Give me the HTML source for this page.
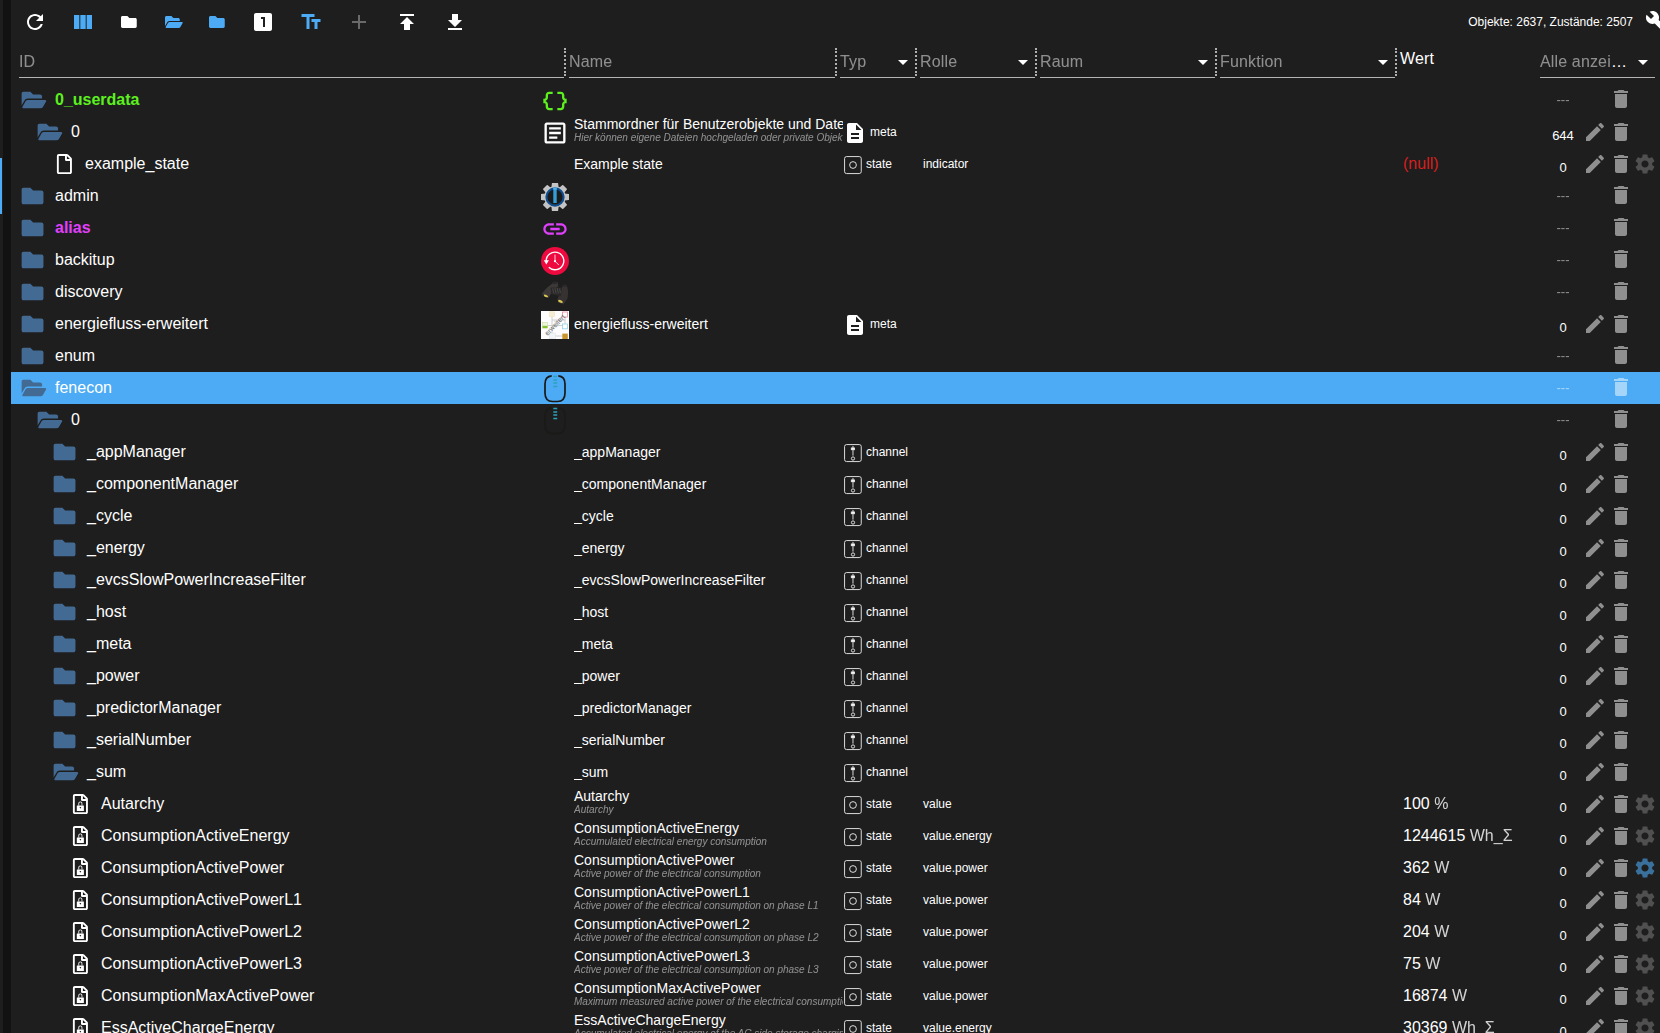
<!DOCTYPE html>
<html lang="de"><head><meta charset="utf-8"><title>objects - ioBroker</title>
<style>
*{box-sizing:border-box}
html,body{margin:0;padding:0;background:#1e1e1e;overflow:hidden}
body{font-family:"Liberation Sans",Arial,Helvetica,sans-serif;color:#fff}
#app{position:relative;width:1660px;height:1033px;overflow:hidden;background:#1e1e1e}
.strip{position:absolute;left:0;top:0;width:3px;height:1033px;background:#1e1e1e}
.strip2{position:absolute;left:3px;top:0;width:8px;height:1033px;background:#121212}
.stripsel{position:absolute;left:0;top:158px;width:2px;height:56px;background:#4dabf5}
.main{position:absolute;left:0;top:0;width:1660px;height:1033px}
.ic{position:absolute;fill:currentColor;display:block;overflow:visible}
.stats{position:absolute;right:27px;top:14px;font-size:12px;line-height:16px;white-space:nowrap}
.hid{position:absolute;left:19px;top:46px;font-size:16px;line-height:32px;color:#fff;filter:opacity(.5)}
.ul{position:absolute;top:77px;height:1px;background:#b4b4b4}
.hc{position:absolute;top:48px;height:28px;border-left:2px dotted #b0b0b0;font-size:16px;color:#8a8a8a}
.hc span{position:absolute;left:3px;top:-2px;line-height:32px;color:#fff;filter:opacity(.5)}
.hc span.wert{color:#fff;top:-5px;filter:none}
.hall{position:absolute;left:1540px;top:46px;width:90px;font-size:16px;line-height:32px;color:#fff;white-space:nowrap}
.hall b{font-weight:normal;filter:opacity(.5);display:inline-block}
.hall i{font-style:normal;color:#fff}
.row{position:absolute;left:11px;width:1649px;height:32px;margin-left:-11px;padding-left:0}
.row{left:0;margin-left:0;width:1660px}
.row.sel::before{content:"";position:absolute;left:11px;right:0;top:0;height:32px;background:#4dabf5}
.id{position:absolute;top:0;font-size:16px;line-height:32px;white-space:nowrap}
.id.b{font-weight:bold}
.id.green{color:#5cf01e}
.id.mag{color:#e040fb}
.nic{position:absolute;width:28px;height:28px}
.nic svg{display:block}
.nm{position:absolute;left:574px;width:269px;overflow:hidden;white-space:nowrap}
.nm.one{top:0;font-size:14px;line-height:32px}
.nm.two{top:0;height:32px}
.n1{font-size:14px;line-height:16px;margin-top:0}
.n2{font-size:10px;line-height:11px;font-style:italic;color:#fff;filter:opacity(.5);margin-top:0}
.ty{position:absolute;top:0;font-size:12px;line-height:32px}
.ro{position:absolute;left:923px;top:0;font-size:12px;line-height:32px;white-space:nowrap}
.va{position:absolute;left:1403px;top:0;font-size:16px;line-height:32px;white-space:nowrap}
.va .unit{filter:opacity(.8)}
.null{color:#d81e1e}
.acl{position:absolute;left:1543px;width:40px;text-align:center;top:4px;font-size:13px;line-height:32px}
.acl.dash{top:0;color:#fff;filter:opacity(.5)}

.hid,.hc span,.hall{letter-spacing:.15px}
.hall b{position:relative}

</style></head><body>
<svg width="0" height="0" style="position:absolute"><defs>
<symbol id="i-refresh" viewBox="0 0 24 24"><path d="M17.65 6.35C16.2 4.9 14.21 4 12 4c-4.42 0-7.99 3.58-7.99 8s3.57 8 7.99 8c3.73 0 6.84-2.55 7.73-6h-2.08c-.82 2.33-3.04 4-5.65 4-3.31 0-6-2.69-6-6s2.69-6 6-6c1.66 0 3.14.69 4.22 1.78L13 11h7V4l-2.35 2.35z"/></symbol>
<symbol id="i-viewcol" viewBox="0 0 24 24"><path d="M14.67 5v14H9.33V5h5.34zm1 14H21V5h-5.33v14zm-7.34 0V5H3v14h5.33z"/></symbol>
<symbol id="i-folder" viewBox="0 0 24 24"><path d="M10 4H4c-1.1 0-1.99.9-1.99 2L2 18c0 1.1.9 2 2 2h16c1.1 0 2-.9 2-2V8c0-1.1-.9-2-2-2h-8l-2-2z"/></symbol>
<symbol id="i-faopen" viewBox="0 0 650 512"><path d="M572.694 292.093L500.27 416.248A63.997 63.997 0 0 1 444.989 448H45.025c-18.523 0-30.064-20.093-20.731-36.093l72.424-124.155A64 64 0 0 1 152 256h399.964c18.523 0 30.064 20.093 20.73 36.093zM152 224h328v-48c0-26.51-21.49-48-48-48H272l-64-64H48C21.49 64 0 85.49 0 112v278.046l69.077-118.418C86.214 242.25 117.989 224 152 224z"/></symbol>
<symbol id="i-faclosed" viewBox="0 0 650 512"><path d="M464 128H272l-64-64H48C21.49 64 0 85.49 0 112v288c0 26.51 21.49 48 48 48h416c26.51 0 48-21.49 48-48V176c0-26.51-21.49-48-48-48z"/></symbol>
<symbol id="i-fadoc" viewBox="0 0 384 512"><path d="M369.9 97.9L286 14C277 5 264.8 0 252.1 0H48C21.5 0 0 21.5 0 48v416c0 26.5 21.5 48 48 48h288c26.5 0 48-21.5 48-48V131.900c0-12.700-5.100-25-14.100-34zM332.100 128H256V51.900l76.100 76.100zM48 464V48h160v104c0 13.300 10.700 24 24 24h104v288H48z"/></symbol>
<symbol id="i-fadoclock" viewBox="0 0 384 512"><path d="M369.9 97.9L286 14C277 5 264.8 0 252.1 0H48C21.5 0 0 21.5 0 48v416c0 26.5 21.5 48 48 48h288c26.5 0 48-21.5 48-48V131.900c0-12.700-5.100-25-14.100-34zM332.100 128H256V51.900l76.100 76.100zM48 464V48h160v104c0 13.300 10.700 24 24 24h104v288H48z"/><path fill-rule="evenodd" d="M108 294h165q8 0 8 8v125q0 8-8 8H108q-8 0-8-8V302q0-8 8-8zM169 334h44l-22 42z"/><path d="M139 296V244a52 52 0 0 1 104 0V296h-22V244a30 30 0 0 0-60 0V296z"/></symbol>
<symbol id="i-looks1" viewBox="0 0 24 24"><path d="M19 3H5c-1.1 0-2 .9-2 2v14c0 1.1.9 2 2 2h14c1.1 0 2-.9 2-2V5c0-1.1-.9-2-2-2zm-5 14h-2V9h-2V7h4v10z"/></symbol>
<symbol id="i-textfields" viewBox="0 0 24 24"><path d="M2.5 4v3h5v12h3V7h5V4h-13zm19 5h-9v3h3v7h3v-7h3V9z"/></symbol>
<symbol id="i-add" viewBox="0 0 24 24"><path d="M19 13h-6v6h-2v-6H5v-2h6V5h2v6h6v2z"/></symbol>
<symbol id="i-publish" viewBox="0 0 24 24"><path d="M5 4v2h14V4H5zm0 10h4v6h6v-6h4l-7-7-7 7z"/></symbol>
<symbol id="i-getapp" viewBox="0 0 24 24"><path d="M5 20v-2h14v2H5zm0-10h4V4h6v6h4l-7 7-7-7z"/></symbol>
<symbol id="i-build" viewBox="0 0 24 24"><path d="M22.7 19l-9.100-9.100c.9-2.300.4-5-1.500-6.900-2-2-5-2.400-7.400-1.300L9 6 6 9 1.600 4.700C.4 7.100.9 10.100 2.900 12.100c1.900 1.900 4.600 2.400 6.900 1.500l9.100 9.100c.4.400 1 .400 1.400 0l2.300-2.300c.5-.4.5-1.100.1-1.400z"/></symbol>
<symbol id="i-delete" viewBox="0 0 24 24"><path d="M6 19c0 1.100.9 2 2 2h8c1.100 0 2-.9 2-2V7H6v12zM19 4h-3.500l-1-1h-5l-1 1H5v2h14V4z"/></symbol>
<symbol id="i-edit" viewBox="0 0 24 24"><path d="M3 17.25V21h3.750L17.810 9.940l-3.750-3.750L3 17.250zM20.710 7.040c.39-.39.39-1.020 0-1.410l-2.340-2.340c-.39-.39-1.020-.39-1.410 0l-1.830 1.830 3.750 3.750 1.830-1.830z"/></symbol>
<symbol id="i-settings" viewBox="0 0 24 24"><path d="M19.14 12.94c.04-.3.06-.61.06-.94 0-.32-.02-.64-.07-.94l2.030-1.580c.18-.14.23-.41.12-.61l-1.920-3.320c-.12-.22-.37-.29-.59-.22l-2.390.96c-.5-.38-1.030-.7-1.620-.94l-.36-2.540c-.04-.24-.24-.41-.48-.41h-3.840c-.24 0-.43.17-.47.41l-.36 2.540c-.59.24-1.130.57-1.620.94l-2.390-.96c-.22-.08-.47 0-.59.22L2.740 8.870c-.12.21-.08.47.12.61l2.030 1.580c-.05.3-.09.63-.09.94s.02.64.07.94l-2.030 1.580c-.18.14-.23.41-.12.61l1.920 3.320c.12.22.37.29.59.22l2.390-.96c.5.38 1.030.7 1.620.94l.36 2.540c.05.24.24.41.48.41h3.840c.24 0 .44-.17.47-.41l.36-2.540c.59-.24 1.130-.56 1.620-.94l2.390.96c.22.08.47 0 .59-.22l1.920-3.320c.12-.22.07-.47-.12-.61l-2.010-1.580zM12 15.600c-1.980 0-3.600-1.620-3.600-3.600s1.620-3.600 3.600-3.600 3.600 1.620 3.600 3.600-1.620 3.600-3.600 3.600z"/></symbol>
<symbol id="i-dd" viewBox="0 0 24 24"><path d="M7 10l5 5 5-5z"/></symbol>
<symbol id="i-description" viewBox="0 0 24 24"><path d="M14 2H6c-1.100 0-1.990.9-1.990 2L4 20c0 1.100.89 2 1.990 2H18c1.100 0 2-.9 2-2V8l-6-6zm2 16H8v-2h8v2zm0-4H8v-2h8v2zm-3-5V3.500L18.500 9H13z"/></symbol>
<symbol id="i-link" viewBox="0 0 24 24"><path d="M3.900 12c0-1.710 1.390-3.100 3.100-3.100h4V7H7c-2.760 0-5 2.240-5 5s2.240 5 5 5h4v-1.900H7c-1.710 0-3.100-1.390-3.100-3.100zM8 13h8v-2H8v2zm9-6h-4v1.900h4c1.710 0 3.100 1.390 3.100 3.100s-1.390 3.100-3.100 3.100h-4V17h4c2.760 0 5-2.240 5-5s-2.240-5-5-5z"/></symbol>
<symbol id="i-article" viewBox="0 0 24 24"><path d="M19 5v14H5V5h14m0-2H5c-1.100 0-2 .9-2 2v14c0 1.100.9 2 2 2h14c1.100 0 2-.9 2-2V5c0-1.100-.9-2-2-2zM14 17H7v-2h7v2zm3-4H7v-2h10v2zm0-4H7V7h10v2z"/></symbol>
<symbol id="i-dataobj" viewBox="0 0 24 24"><path d="M4 7v2c0 .55-.45 1-1 1H2v4h1c.55 0 1 .45 1 1v2c0 1.650 1.350 3 3 3h3v-2H7c-.55 0-1-.45-1-1v-2c0-1.300-.84-2.420-2-2.830v-.34C5.160 11.420 6 10.300 6 9V7c0-.55.45-1 1-1h3V4H7C5.350 4 4 5.350 4 7zM21 10c-.55 0-1-.45-1-1V7c0-1.650-1.350-3-3-3h-3v2h3c.55 0 1 .45 1 1v2c0 1.300.84 2.420 2 2.830v.34c-1.160.41-2 1.520-2 2.830v2c0 .55-.45 1-1 1h-3v2h3c1.650 0 3-1.350 3-3v-2c0-.55.45-1 1-1h1v-4h-1z"/></symbol>
<symbol id="i-state" viewBox="0 0 320 320"><rect fill="none" rx="32" height="272" width="267" y="25" x="25" stroke-width="15" stroke="currentColor"/><ellipse fill="none" ry="54" rx="54" cy="160" cx="160" stroke-width="15" stroke="currentColor"/></symbol>
<symbol id="i-channel" viewBox="0 0 320 320"><rect fill="none" rx="32" height="272" width="267" y="25" x="25" stroke-width="15" stroke="currentColor"/><ellipse stroke="currentColor" ry="26" rx="26" cy="248" cx="160" fill="none" stroke-width="15"/><line y2="201.9" x2="159.5" y1="46.9" x1="159.5" stroke-width="15" stroke="currentColor" fill="none"/><rect height="27" width="50" y="79.8" x="133.500" stroke-width="15" stroke="currentColor" fill="#fff"/></symbol>
</defs></svg>
<div id="app">
<div class="strip"></div><div class="strip2"></div><div class="stripsel"></div>
<div class="main">
<svg class="ic" style="left:23px;top:10px;width:24px;height:24px;color:#fff;"><use href="#i-refresh" width="24" height="24"/></svg><svg class="ic" style="left:71px;top:10px;width:24px;height:24px;color:#4dabf5;"><use href="#i-viewcol" width="24" height="24"/></svg><svg class="ic" style="left:121px;top:12px;width:20px;height:20px;color:#fff;"><use href="#i-faclosed" width="20" height="20"/></svg><svg class="ic" style="left:165px;top:12px;width:20px;height:20px;color:#4dabf5;"><use href="#i-faopen" width="20" height="20"/></svg><svg class="ic" style="left:209px;top:12px;width:20px;height:20px;color:#4dabf5;"><use href="#i-faclosed" width="20" height="20"/></svg><svg class="ic" style="left:251px;top:10px;width:24px;height:24px;color:#fff;"><use href="#i-looks1" width="24" height="24"/></svg><svg class="ic" style="left:299px;top:10px;width:24px;height:24px;color:#4dabf5;"><use href="#i-textfields" width="24" height="24"/></svg><svg class="ic" style="left:347px;top:10px;width:24px;height:24px;color:#6a6a6a;"><use href="#i-add" width="24" height="24"/></svg><svg class="ic" style="left:395px;top:10px;width:24px;height:24px;color:#fff;"><use href="#i-publish" width="24" height="24"/></svg><svg class="ic" style="left:443px;top:10px;width:24px;height:24px;color:#fff;"><use href="#i-getapp" width="24" height="24"/></svg>
<div class="stats">Objekte: 2637, Zustände: 2507</div>
<svg class="ic" style="left:1645px;top:10px;width:24px;height:24px;color:#fff;"><use href="#i-build" width="24" height="24"/></svg>
<div class="hid">ID</div><div class="ul" style="left:19px;width:545px"></div><div class="hc" style="left:564px;width:271px"><span>Name</span><div class="ul" style="left:3px;right:0;top:29px"></div></div><div class="hc" style="left:835px;width:80px"><span>Typ</span><div class="ul" style="left:3px;right:0;top:29px"></div><svg class="ic" style="left:54px;top:2px;width:24px;height:24px;color:#fff;"><use href="#i-dd" width="24" height="24"/></svg></div><div class="hc" style="left:915px;width:120px"><span>Rolle</span><div class="ul" style="left:3px;right:0;top:29px"></div><svg class="ic" style="left:94px;top:2px;width:24px;height:24px;color:#fff;"><use href="#i-dd" width="24" height="24"/></svg></div><div class="hc" style="left:1035px;width:180px"><span>Raum</span><div class="ul" style="left:3px;right:0;top:29px"></div><svg class="ic" style="left:154px;top:2px;width:24px;height:24px;color:#fff;"><use href="#i-dd" width="24" height="24"/></svg></div><div class="hc" style="left:1215px;width:180px"><span>Funktion</span><div class="ul" style="left:3px;right:0;top:29px"></div><svg class="ic" style="left:154px;top:2px;width:24px;height:24px;color:#fff;"><use href="#i-dd" width="24" height="24"/></svg></div><div class="hc" style="left:1395px;width:100px"><span class="wert">Wert</span></div><div class="hall"><b>Alle anzei</b><i>…</i></div><div class="ul" style="left:1540px;width:115px"></div><svg class="ic" style="left:1631px;top:50px;width:24px;height:24px;color:#fff;"><use href="#i-dd" width="24" height="24"/></svg>
<div class="row" style="top:84px"><svg class="ic" style="left:21px;top:2px;width:28px;height:28px;color:#436a93;"><use href="#i-faopen" width="28" height="28" transform="translate(0.4 0)"/></svg><div class="id b green" style="left:55px">0_userdata</div><svg class="ic" style="left:541px;top:3px;width:28px;height:28px;color:#5cf01e;"><use href="#i-dataobj" width="28" height="28"/></svg><div class="acl dash">---</div><svg class="ic" style="left:1609px;top:3px;width:24px;height:24px;color:#fff;opacity:0.5;"><use href="#i-delete" width="24" height="24"/></svg></div>
<div class="row" style="top:116px"><svg class="ic" style="left:37px;top:2px;width:28px;height:28px;color:#436a93;"><use href="#i-faopen" width="28" height="28" transform="translate(0.4 0)"/></svg><div class="id " style="left:71px">0</div><svg class="ic" style="left:541px;top:3px;width:28px;height:28px;color:#fff;"><use href="#i-article" width="28" height="28"/></svg><div class="nm two"><div class="n1">Stammordner für Benutzerobjekte und Dateien</div><div class="n2">Hier können eigene Dateien hochgeladen oder private Objekte und Zustände erstellt werden</div></div><svg class="ic" style="left:843px;top:5px;width:24px;height:24px;color:#fff;"><use href="#i-description" width="24" height="24"/></svg><div class="ty" style="left:870px">meta</div><div class="acl">644</div><svg class="ic" style="left:1583px;top:4px;width:24px;height:24px;color:#fff;opacity:0.5;"><use href="#i-edit" width="24" height="24"/></svg><svg class="ic" style="left:1609px;top:4px;width:24px;height:24px;color:#fff;opacity:0.5;"><use href="#i-delete" width="24" height="24"/></svg></div>
<div class="row" style="top:148px"><svg class="ic" style="left:54px;top:6px;width:20px;height:20px;color:#fff;"><use href="#i-fadoc" width="20" height="20" transform="translate(0.4 0)"/></svg><div class="id " style="left:85px">example_state</div><div class="nm one">Example state</div><svg class="ic" style="left:843px;top:7px;width:20px;height:20px;color:#e6e6e6;"><use href="#i-state" width="20" height="20"/></svg><div class="ty" style="left:866px">state</div><div class="ro">indicator</div><div class="va"><span class="null">(null)</span></div><div class="acl">0</div><svg class="ic" style="left:1583px;top:4px;width:24px;height:24px;color:#fff;opacity:0.5;"><use href="#i-edit" width="24" height="24"/></svg><svg class="ic" style="left:1609px;top:4px;width:24px;height:24px;color:#fff;opacity:0.5;"><use href="#i-delete" width="24" height="24"/></svg><svg class="ic" style="left:1633px;top:4px;width:24px;height:24px;color:#fff;opacity:0.22;"><use href="#i-settings" width="24" height="24"/></svg></div>
<div class="row" style="top:180px"><svg class="ic" style="left:21px;top:2px;width:28px;height:28px;color:#436a93;"><use href="#i-faclosed" width="28" height="28" transform="translate(0.4 0)"/></svg><div class="id " style="left:55px">admin</div><div class="nic" style="left:541px;top:3px"><svg width="28" height="28" viewBox="0 0 28 28"><g fill="#c4c4c4"><circle cx="14" cy="14" r="10.700"/><path d="M10.400 4.500L10.900 0.300Q11 -0.200 11.500 -0.200H16.500Q17 -0.200 17.100 0.300L17.600 4.500z"/><path d="M10.400 4.500L10.900 0.300Q11 -0.200 11.500 -0.200H16.500Q17 -0.200 17.100 0.300L17.600 4.500z" transform="rotate(45 14 14)"/><path d="M10.400 4.500L10.900 0.300Q11 -0.200 11.500 -0.200H16.500Q17 -0.200 17.100 0.300L17.600 4.500z" transform="rotate(90 14 14)"/><path d="M10.400 4.500L10.900 0.300Q11 -0.200 11.500 -0.200H16.500Q17 -0.200 17.100 0.300L17.600 4.500z" transform="rotate(135 14 14)"/><path d="M10.400 4.500L10.900 0.300Q11 -0.200 11.500 -0.200H16.500Q17 -0.200 17.100 0.300L17.600 4.500z" transform="rotate(180 14 14)"/><path d="M10.400 4.500L10.900 0.300Q11 -0.200 11.500 -0.200H16.500Q17 -0.200 17.100 0.300L17.600 4.500z" transform="rotate(225 14 14)"/><path d="M10.400 4.500L10.900 0.300Q11 -0.200 11.500 -0.200H16.500Q17 -0.200 17.100 0.300L17.600 4.500z" transform="rotate(270 14 14)"/><path d="M10.400 4.500L10.900 0.300Q11 -0.200 11.500 -0.200H16.500Q17 -0.200 17.100 0.300L17.600 4.500z" transform="rotate(315 14 14)"/></g><circle cx="14" cy="14" r="8.600" fill="#1b1a1b" stroke="#0f4d8d" stroke-width="2.100"/><rect x="12.300" y="4.600" width="3.400" height="15.400" fill="#369cd8"/><rect x="12.300" y="4.600" width="3.400" height="2" fill="#52b4ec"/></svg></div><div class="acl dash">---</div><svg class="ic" style="left:1609px;top:3px;width:24px;height:24px;color:#fff;opacity:0.5;"><use href="#i-delete" width="24" height="24"/></svg></div>
<div class="row" style="top:212px"><svg class="ic" style="left:21px;top:2px;width:28px;height:28px;color:#436a93;"><use href="#i-faclosed" width="28" height="28" transform="translate(0.4 0)"/></svg><div class="id b mag" style="left:55px">alias</div><svg class="ic" style="left:541px;top:3px;width:28px;height:28px;color:#e040fb;"><use href="#i-link" width="28" height="28"/></svg><div class="acl dash">---</div><svg class="ic" style="left:1609px;top:3px;width:24px;height:24px;color:#fff;opacity:0.5;"><use href="#i-delete" width="24" height="24"/></svg></div>
<div class="row" style="top:244px"><svg class="ic" style="left:21px;top:2px;width:28px;height:28px;color:#436a93;"><use href="#i-faclosed" width="28" height="28" transform="translate(0.4 0)"/></svg><div class="id " style="left:55px">backitup</div><div class="nic" style="left:541px;top:3px"><svg width="28" height="28" viewBox="0 0 28 28"><circle cx="14" cy="14" r="14" fill="#ee0a3e"/><path d="M5.200 14A8.800 8.800 0 1 1 7.800 20.200" fill="none" stroke="#fff" stroke-width="1.400"/><path d="M2.800 13.200H8L5.300 17.400z" fill="#fff"/><path d="M14 7.600V14.200L17.800 18" fill="none" stroke="#fff" stroke-width=".9" stroke-opacity=".9"/><circle cx="14" cy="14.200" r="1.100" fill="#fff"/></svg></div><div class="acl dash">---</div><svg class="ic" style="left:1609px;top:3px;width:24px;height:24px;color:#fff;opacity:0.5;"><use href="#i-delete" width="24" height="24"/></svg></div>
<div class="row" style="top:276px"><svg class="ic" style="left:21px;top:2px;width:28px;height:28px;color:#436a93;"><use href="#i-faclosed" width="28" height="28" transform="translate(0.4 0)"/></svg><div class="id " style="left:55px">discovery</div><div class="nic" style="left:541px;top:3px"><svg width="28" height="28" viewBox="0 0 28 28"><g><path d="M12.300 3.700L16.400 3l1 4.100-7.800 8.100-2 4.100-6.100-2-.7-2.700 5.400-6.100z" fill="#3c3838"/><path d="M21.800 6.400h4.100l1.300 6.100-.6 6.800-4.100 6.100-5.400-2-.7-3.400 3.400-7.500z" fill="#363232"/><path d="M9.600 8.500H21.100L19.800 17.300 10.300 15.200z" fill="#2a2828"/><path d="M11.500 9.500l1.500 5M13.800 9l1.400 5.500M16.200 9l1.200 5.500M18.600 9.500l.8 4.500" stroke="#4c4848" stroke-width=".9"/><ellipse cx="13.600" cy="3.700" rx="2.300" ry="1.200" fill="#2a2828"/><ellipse cx="23.800" cy="6.600" rx="2.300" ry="1.200" fill="#2a2828"/><ellipse cx="4.900" cy="16.900" rx="2.300" ry="1.100" transform="rotate(24 4.900 16.900)" fill="#d9c84e"/><ellipse cx="19.400" cy="22.400" rx="2.500" ry="1.200" transform="rotate(24 19.400 22.400)" fill="#d9c84e"/><path d="M1.800 15.500l1 2.800 4.500 1.500" stroke="#1a1818" stroke-width=".8" fill="none"/></g></svg></div><div class="acl dash">---</div><svg class="ic" style="left:1609px;top:3px;width:24px;height:24px;color:#fff;opacity:0.5;"><use href="#i-delete" width="24" height="24"/></svg></div>
<div class="row" style="top:308px"><svg class="ic" style="left:21px;top:2px;width:28px;height:28px;color:#436a93;"><use href="#i-faclosed" width="28" height="28" transform="translate(0.4 0)"/></svg><div class="id " style="left:55px">energiefluss-erweitert</div><div class="nic" style="left:541px;top:3px"><svg width="28" height="28" viewBox="0 0 28 28"><rect width="28" height="28" fill="#fdfdfd"/><path d="M11 5.600V22M6.500 14.500H21.500M14.400 25H21.300M24 6.300V12.800M11 9H24" stroke="#c4c4c4" stroke-width=".8" fill="none"/><rect x="8.200" y=".8" width="5.500" height="4.800" fill="#f6efd6" stroke="#eadfb4" stroke-width=".5"/><rect x="21.500" y="1" width="5" height="5" fill="#fff" stroke="#e58a9b" stroke-width=".8"/><rect x="1.500" y="11.500" width="5" height="5.800" fill="#eef6e0" stroke="#bcd98f" stroke-width=".5"/><rect x="1.500" y="14.800" width="5" height="2.200" fill="#86c232"/><rect x="21.500" y="13" width="5" height="4.800" fill="#fff" stroke="#93d1ea" stroke-width=".8"/><rect x="8.200" y="22" width="6.200" height="5.800" fill="#f2f4f5" stroke="#dcdfe2" stroke-width=".5"/><rect x="21.300" y="22.600" width="5.500" height="5.400" fill="#c8962e"/><text x="14" y="16.200" font-size="6.800" font-family="Liberation Sans, sans-serif" fill="#6c6c6c" text-anchor="middle" transform="rotate(-46 14 14)">erweitert</text></svg></div><div class="nm one">energiefluss-erweitert</div><svg class="ic" style="left:843px;top:5px;width:24px;height:24px;color:#fff;"><use href="#i-description" width="24" height="24"/></svg><div class="ty" style="left:870px">meta</div><div class="acl">0</div><svg class="ic" style="left:1583px;top:4px;width:24px;height:24px;color:#fff;opacity:0.5;"><use href="#i-edit" width="24" height="24"/></svg><svg class="ic" style="left:1609px;top:4px;width:24px;height:24px;color:#fff;opacity:0.5;"><use href="#i-delete" width="24" height="24"/></svg></div>
<div class="row" style="top:340px"><svg class="ic" style="left:21px;top:2px;width:28px;height:28px;color:#436a93;"><use href="#i-faclosed" width="28" height="28" transform="translate(0.4 0)"/></svg><div class="id " style="left:55px">enum</div><div class="acl dash">---</div><svg class="ic" style="left:1609px;top:3px;width:24px;height:24px;color:#fff;opacity:0.5;"><use href="#i-delete" width="24" height="24"/></svg></div>
<div class="row sel" style="top:372px"><svg class="ic" style="left:21px;top:2px;width:28px;height:28px;color:#436a93;"><use href="#i-faopen" width="28" height="28" transform="translate(0.4 0)"/></svg><div class="id " style="left:55px">fenecon</div><div class="nic" style="left:541px;top:3px"><svg width="28" height="28" viewBox="0 0 28 28"><path d="M10.700 .9C6.500 1.300 4 4.200 4 9V18C4 23.800 6.800 26.500 11.500 26.500H16.500C21.200 26.500 24 23.800 24 18V9C24 4.200 21.500 1.300 17.300 .9" fill="none" stroke="#1a1715" stroke-width="1.700"/><path d="M12.300 1.500H16.200M12.300 4.900H16.200M12.300 8.100H16.200M12.300 11.500H16.200" stroke="#2aa2bc" stroke-width="1.500"/></svg></div><div class="acl dash">---</div><svg class="ic" style="left:1609px;top:3px;width:24px;height:24px;color:#fff;opacity:0.5;"><use href="#i-delete" width="24" height="24"/></svg></div>
<div class="row" style="top:404px"><svg class="ic" style="left:37px;top:2px;width:28px;height:28px;color:#436a93;"><use href="#i-faopen" width="28" height="28" transform="translate(0.4 0)"/></svg><div class="id " style="left:71px">0</div><div class="nic" style="left:541px;top:3px"><svg width="28" height="28" viewBox="0 0 28 28"><path d="M10.700 .9C6.500 1.300 4 4.200 4 9V18C4 23.800 6.800 26.500 11.500 26.500H16.500C21.200 26.500 24 23.800 24 18V9C24 4.200 21.500 1.300 17.300 .9" fill="none" stroke="#1b1a19" stroke-width="1.700"/><path d="M12.300 1.500H16.200M12.300 4.900H16.200M12.300 8.100H16.200M12.300 11.500H16.200" stroke="#2aa2bc" stroke-width="1.500"/></svg></div><div class="acl dash">---</div><svg class="ic" style="left:1609px;top:3px;width:24px;height:24px;color:#fff;opacity:0.5;"><use href="#i-delete" width="24" height="24"/></svg></div>
<div class="row" style="top:436px"><svg class="ic" style="left:53px;top:2px;width:28px;height:28px;color:#436a93;"><use href="#i-faclosed" width="28" height="28" transform="translate(0.4 0)"/></svg><div class="id " style="left:87px">_appManager</div><div class="nm one">_appManager</div><svg class="ic" style="left:843px;top:7px;width:20px;height:20px;color:#e6e6e6;"><use href="#i-channel" width="20" height="20"/></svg><div class="ty" style="left:866px">channel</div><div class="acl">0</div><svg class="ic" style="left:1583px;top:4px;width:24px;height:24px;color:#fff;opacity:0.5;"><use href="#i-edit" width="24" height="24"/></svg><svg class="ic" style="left:1609px;top:4px;width:24px;height:24px;color:#fff;opacity:0.5;"><use href="#i-delete" width="24" height="24"/></svg></div>
<div class="row" style="top:468px"><svg class="ic" style="left:53px;top:2px;width:28px;height:28px;color:#436a93;"><use href="#i-faclosed" width="28" height="28" transform="translate(0.4 0)"/></svg><div class="id " style="left:87px">_componentManager</div><div class="nm one">_componentManager</div><svg class="ic" style="left:843px;top:7px;width:20px;height:20px;color:#e6e6e6;"><use href="#i-channel" width="20" height="20"/></svg><div class="ty" style="left:866px">channel</div><div class="acl">0</div><svg class="ic" style="left:1583px;top:4px;width:24px;height:24px;color:#fff;opacity:0.5;"><use href="#i-edit" width="24" height="24"/></svg><svg class="ic" style="left:1609px;top:4px;width:24px;height:24px;color:#fff;opacity:0.5;"><use href="#i-delete" width="24" height="24"/></svg></div>
<div class="row" style="top:500px"><svg class="ic" style="left:53px;top:2px;width:28px;height:28px;color:#436a93;"><use href="#i-faclosed" width="28" height="28" transform="translate(0.4 0)"/></svg><div class="id " style="left:87px">_cycle</div><div class="nm one">_cycle</div><svg class="ic" style="left:843px;top:7px;width:20px;height:20px;color:#e6e6e6;"><use href="#i-channel" width="20" height="20"/></svg><div class="ty" style="left:866px">channel</div><div class="acl">0</div><svg class="ic" style="left:1583px;top:4px;width:24px;height:24px;color:#fff;opacity:0.5;"><use href="#i-edit" width="24" height="24"/></svg><svg class="ic" style="left:1609px;top:4px;width:24px;height:24px;color:#fff;opacity:0.5;"><use href="#i-delete" width="24" height="24"/></svg></div>
<div class="row" style="top:532px"><svg class="ic" style="left:53px;top:2px;width:28px;height:28px;color:#436a93;"><use href="#i-faclosed" width="28" height="28" transform="translate(0.4 0)"/></svg><div class="id " style="left:87px">_energy</div><div class="nm one">_energy</div><svg class="ic" style="left:843px;top:7px;width:20px;height:20px;color:#e6e6e6;"><use href="#i-channel" width="20" height="20"/></svg><div class="ty" style="left:866px">channel</div><div class="acl">0</div><svg class="ic" style="left:1583px;top:4px;width:24px;height:24px;color:#fff;opacity:0.5;"><use href="#i-edit" width="24" height="24"/></svg><svg class="ic" style="left:1609px;top:4px;width:24px;height:24px;color:#fff;opacity:0.5;"><use href="#i-delete" width="24" height="24"/></svg></div>
<div class="row" style="top:564px"><svg class="ic" style="left:53px;top:2px;width:28px;height:28px;color:#436a93;"><use href="#i-faclosed" width="28" height="28" transform="translate(0.4 0)"/></svg><div class="id " style="left:87px">_evcsSlowPowerIncreaseFilter</div><div class="nm one">_evcsSlowPowerIncreaseFilter</div><svg class="ic" style="left:843px;top:7px;width:20px;height:20px;color:#e6e6e6;"><use href="#i-channel" width="20" height="20"/></svg><div class="ty" style="left:866px">channel</div><div class="acl">0</div><svg class="ic" style="left:1583px;top:4px;width:24px;height:24px;color:#fff;opacity:0.5;"><use href="#i-edit" width="24" height="24"/></svg><svg class="ic" style="left:1609px;top:4px;width:24px;height:24px;color:#fff;opacity:0.5;"><use href="#i-delete" width="24" height="24"/></svg></div>
<div class="row" style="top:596px"><svg class="ic" style="left:53px;top:2px;width:28px;height:28px;color:#436a93;"><use href="#i-faclosed" width="28" height="28" transform="translate(0.4 0)"/></svg><div class="id " style="left:87px">_host</div><div class="nm one">_host</div><svg class="ic" style="left:843px;top:7px;width:20px;height:20px;color:#e6e6e6;"><use href="#i-channel" width="20" height="20"/></svg><div class="ty" style="left:866px">channel</div><div class="acl">0</div><svg class="ic" style="left:1583px;top:4px;width:24px;height:24px;color:#fff;opacity:0.5;"><use href="#i-edit" width="24" height="24"/></svg><svg class="ic" style="left:1609px;top:4px;width:24px;height:24px;color:#fff;opacity:0.5;"><use href="#i-delete" width="24" height="24"/></svg></div>
<div class="row" style="top:628px"><svg class="ic" style="left:53px;top:2px;width:28px;height:28px;color:#436a93;"><use href="#i-faclosed" width="28" height="28" transform="translate(0.4 0)"/></svg><div class="id " style="left:87px">_meta</div><div class="nm one">_meta</div><svg class="ic" style="left:843px;top:7px;width:20px;height:20px;color:#e6e6e6;"><use href="#i-channel" width="20" height="20"/></svg><div class="ty" style="left:866px">channel</div><div class="acl">0</div><svg class="ic" style="left:1583px;top:4px;width:24px;height:24px;color:#fff;opacity:0.5;"><use href="#i-edit" width="24" height="24"/></svg><svg class="ic" style="left:1609px;top:4px;width:24px;height:24px;color:#fff;opacity:0.5;"><use href="#i-delete" width="24" height="24"/></svg></div>
<div class="row" style="top:660px"><svg class="ic" style="left:53px;top:2px;width:28px;height:28px;color:#436a93;"><use href="#i-faclosed" width="28" height="28" transform="translate(0.4 0)"/></svg><div class="id " style="left:87px">_power</div><div class="nm one">_power</div><svg class="ic" style="left:843px;top:7px;width:20px;height:20px;color:#e6e6e6;"><use href="#i-channel" width="20" height="20"/></svg><div class="ty" style="left:866px">channel</div><div class="acl">0</div><svg class="ic" style="left:1583px;top:4px;width:24px;height:24px;color:#fff;opacity:0.5;"><use href="#i-edit" width="24" height="24"/></svg><svg class="ic" style="left:1609px;top:4px;width:24px;height:24px;color:#fff;opacity:0.5;"><use href="#i-delete" width="24" height="24"/></svg></div>
<div class="row" style="top:692px"><svg class="ic" style="left:53px;top:2px;width:28px;height:28px;color:#436a93;"><use href="#i-faclosed" width="28" height="28" transform="translate(0.4 0)"/></svg><div class="id " style="left:87px">_predictorManager</div><div class="nm one">_predictorManager</div><svg class="ic" style="left:843px;top:7px;width:20px;height:20px;color:#e6e6e6;"><use href="#i-channel" width="20" height="20"/></svg><div class="ty" style="left:866px">channel</div><div class="acl">0</div><svg class="ic" style="left:1583px;top:4px;width:24px;height:24px;color:#fff;opacity:0.5;"><use href="#i-edit" width="24" height="24"/></svg><svg class="ic" style="left:1609px;top:4px;width:24px;height:24px;color:#fff;opacity:0.5;"><use href="#i-delete" width="24" height="24"/></svg></div>
<div class="row" style="top:724px"><svg class="ic" style="left:53px;top:2px;width:28px;height:28px;color:#436a93;"><use href="#i-faclosed" width="28" height="28" transform="translate(0.4 0)"/></svg><div class="id " style="left:87px">_serialNumber</div><div class="nm one">_serialNumber</div><svg class="ic" style="left:843px;top:7px;width:20px;height:20px;color:#e6e6e6;"><use href="#i-channel" width="20" height="20"/></svg><div class="ty" style="left:866px">channel</div><div class="acl">0</div><svg class="ic" style="left:1583px;top:4px;width:24px;height:24px;color:#fff;opacity:0.5;"><use href="#i-edit" width="24" height="24"/></svg><svg class="ic" style="left:1609px;top:4px;width:24px;height:24px;color:#fff;opacity:0.5;"><use href="#i-delete" width="24" height="24"/></svg></div>
<div class="row" style="top:756px"><svg class="ic" style="left:53px;top:2px;width:28px;height:28px;color:#436a93;"><use href="#i-faopen" width="28" height="28" transform="translate(0.4 0)"/></svg><div class="id " style="left:87px">_sum</div><div class="nm one">_sum</div><svg class="ic" style="left:843px;top:7px;width:20px;height:20px;color:#e6e6e6;"><use href="#i-channel" width="20" height="20"/></svg><div class="ty" style="left:866px">channel</div><div class="acl">0</div><svg class="ic" style="left:1583px;top:4px;width:24px;height:24px;color:#fff;opacity:0.5;"><use href="#i-edit" width="24" height="24"/></svg><svg class="ic" style="left:1609px;top:4px;width:24px;height:24px;color:#fff;opacity:0.5;"><use href="#i-delete" width="24" height="24"/></svg></div>
<div class="row" style="top:788px"><svg class="ic" style="left:70px;top:6px;width:20px;height:20px;color:#fff;"><use href="#i-fadoclock" width="20" height="20" transform="translate(0.4 0)"/></svg><div class="id " style="left:101px">Autarchy</div><div class="nm two"><div class="n1">Autarchy</div><div class="n2">Autarchy</div></div><svg class="ic" style="left:843px;top:7px;width:20px;height:20px;color:#e6e6e6;"><use href="#i-state" width="20" height="20"/></svg><div class="ty" style="left:866px">state</div><div class="ro">value</div><div class="va">100 <span class="unit">%</span></div><div class="acl">0</div><svg class="ic" style="left:1583px;top:4px;width:24px;height:24px;color:#fff;opacity:0.5;"><use href="#i-edit" width="24" height="24"/></svg><svg class="ic" style="left:1609px;top:4px;width:24px;height:24px;color:#fff;opacity:0.5;"><use href="#i-delete" width="24" height="24"/></svg><svg class="ic" style="left:1633px;top:4px;width:24px;height:24px;color:#fff;opacity:0.22;"><use href="#i-settings" width="24" height="24"/></svg></div>
<div class="row" style="top:820px"><svg class="ic" style="left:70px;top:6px;width:20px;height:20px;color:#fff;"><use href="#i-fadoclock" width="20" height="20" transform="translate(0.4 0)"/></svg><div class="id " style="left:101px">ConsumptionActiveEnergy</div><div class="nm two"><div class="n1">ConsumptionActiveEnergy</div><div class="n2">Accumulated electrical energy consumption</div></div><svg class="ic" style="left:843px;top:7px;width:20px;height:20px;color:#e6e6e6;"><use href="#i-state" width="20" height="20"/></svg><div class="ty" style="left:866px">state</div><div class="ro">value.energy</div><div class="va">1244615 <span class="unit">Wh_Σ</span></div><div class="acl">0</div><svg class="ic" style="left:1583px;top:4px;width:24px;height:24px;color:#fff;opacity:0.5;"><use href="#i-edit" width="24" height="24"/></svg><svg class="ic" style="left:1609px;top:4px;width:24px;height:24px;color:#fff;opacity:0.5;"><use href="#i-delete" width="24" height="24"/></svg><svg class="ic" style="left:1633px;top:4px;width:24px;height:24px;color:#fff;opacity:0.22;"><use href="#i-settings" width="24" height="24"/></svg></div>
<div class="row" style="top:852px"><svg class="ic" style="left:70px;top:6px;width:20px;height:20px;color:#fff;"><use href="#i-fadoclock" width="20" height="20" transform="translate(0.4 0)"/></svg><div class="id " style="left:101px">ConsumptionActivePower</div><div class="nm two"><div class="n1">ConsumptionActivePower</div><div class="n2">Active power of the electrical consumption</div></div><svg class="ic" style="left:843px;top:7px;width:20px;height:20px;color:#e6e6e6;"><use href="#i-state" width="20" height="20"/></svg><div class="ty" style="left:866px">state</div><div class="ro">value.power</div><div class="va">362 <span class="unit">W</span></div><div class="acl">0</div><svg class="ic" style="left:1583px;top:4px;width:24px;height:24px;color:#fff;opacity:0.5;"><use href="#i-edit" width="24" height="24"/></svg><svg class="ic" style="left:1609px;top:4px;width:24px;height:24px;color:#fff;opacity:0.5;"><use href="#i-delete" width="24" height="24"/></svg><svg class="ic" style="left:1633px;top:4px;width:24px;height:24px;color:#39709c;opacity:1;"><use href="#i-settings" width="24" height="24"/></svg></div>
<div class="row" style="top:884px"><svg class="ic" style="left:70px;top:6px;width:20px;height:20px;color:#fff;"><use href="#i-fadoclock" width="20" height="20" transform="translate(0.4 0)"/></svg><div class="id " style="left:101px">ConsumptionActivePowerL1</div><div class="nm two"><div class="n1">ConsumptionActivePowerL1</div><div class="n2">Active power of the electrical consumption on phase L1</div></div><svg class="ic" style="left:843px;top:7px;width:20px;height:20px;color:#e6e6e6;"><use href="#i-state" width="20" height="20"/></svg><div class="ty" style="left:866px">state</div><div class="ro">value.power</div><div class="va">84 <span class="unit">W</span></div><div class="acl">0</div><svg class="ic" style="left:1583px;top:4px;width:24px;height:24px;color:#fff;opacity:0.5;"><use href="#i-edit" width="24" height="24"/></svg><svg class="ic" style="left:1609px;top:4px;width:24px;height:24px;color:#fff;opacity:0.5;"><use href="#i-delete" width="24" height="24"/></svg><svg class="ic" style="left:1633px;top:4px;width:24px;height:24px;color:#fff;opacity:0.22;"><use href="#i-settings" width="24" height="24"/></svg></div>
<div class="row" style="top:916px"><svg class="ic" style="left:70px;top:6px;width:20px;height:20px;color:#fff;"><use href="#i-fadoclock" width="20" height="20" transform="translate(0.4 0)"/></svg><div class="id " style="left:101px">ConsumptionActivePowerL2</div><div class="nm two"><div class="n1">ConsumptionActivePowerL2</div><div class="n2">Active power of the electrical consumption on phase L2</div></div><svg class="ic" style="left:843px;top:7px;width:20px;height:20px;color:#e6e6e6;"><use href="#i-state" width="20" height="20"/></svg><div class="ty" style="left:866px">state</div><div class="ro">value.power</div><div class="va">204 <span class="unit">W</span></div><div class="acl">0</div><svg class="ic" style="left:1583px;top:4px;width:24px;height:24px;color:#fff;opacity:0.5;"><use href="#i-edit" width="24" height="24"/></svg><svg class="ic" style="left:1609px;top:4px;width:24px;height:24px;color:#fff;opacity:0.5;"><use href="#i-delete" width="24" height="24"/></svg><svg class="ic" style="left:1633px;top:4px;width:24px;height:24px;color:#fff;opacity:0.22;"><use href="#i-settings" width="24" height="24"/></svg></div>
<div class="row" style="top:948px"><svg class="ic" style="left:70px;top:6px;width:20px;height:20px;color:#fff;"><use href="#i-fadoclock" width="20" height="20" transform="translate(0.4 0)"/></svg><div class="id " style="left:101px">ConsumptionActivePowerL3</div><div class="nm two"><div class="n1">ConsumptionActivePowerL3</div><div class="n2">Active power of the electrical consumption on phase L3</div></div><svg class="ic" style="left:843px;top:7px;width:20px;height:20px;color:#e6e6e6;"><use href="#i-state" width="20" height="20"/></svg><div class="ty" style="left:866px">state</div><div class="ro">value.power</div><div class="va">75 <span class="unit">W</span></div><div class="acl">0</div><svg class="ic" style="left:1583px;top:4px;width:24px;height:24px;color:#fff;opacity:0.5;"><use href="#i-edit" width="24" height="24"/></svg><svg class="ic" style="left:1609px;top:4px;width:24px;height:24px;color:#fff;opacity:0.5;"><use href="#i-delete" width="24" height="24"/></svg><svg class="ic" style="left:1633px;top:4px;width:24px;height:24px;color:#fff;opacity:0.22;"><use href="#i-settings" width="24" height="24"/></svg></div>
<div class="row" style="top:980px"><svg class="ic" style="left:70px;top:6px;width:20px;height:20px;color:#fff;"><use href="#i-fadoclock" width="20" height="20" transform="translate(0.4 0)"/></svg><div class="id " style="left:101px">ConsumptionMaxActivePower</div><div class="nm two"><div class="n1">ConsumptionMaxActivePower</div><div class="n2">Maximum measured active power of the electrical consumption</div></div><svg class="ic" style="left:843px;top:7px;width:20px;height:20px;color:#e6e6e6;"><use href="#i-state" width="20" height="20"/></svg><div class="ty" style="left:866px">state</div><div class="ro">value.power</div><div class="va">16874 <span class="unit">W</span></div><div class="acl">0</div><svg class="ic" style="left:1583px;top:4px;width:24px;height:24px;color:#fff;opacity:0.5;"><use href="#i-edit" width="24" height="24"/></svg><svg class="ic" style="left:1609px;top:4px;width:24px;height:24px;color:#fff;opacity:0.5;"><use href="#i-delete" width="24" height="24"/></svg><svg class="ic" style="left:1633px;top:4px;width:24px;height:24px;color:#fff;opacity:0.22;"><use href="#i-settings" width="24" height="24"/></svg></div>
<div class="row" style="top:1012px"><svg class="ic" style="left:70px;top:6px;width:20px;height:20px;color:#fff;"><use href="#i-fadoclock" width="20" height="20" transform="translate(0.4 0)"/></svg><div class="id " style="left:101px">EssActiveChargeEnergy</div><div class="nm two"><div class="n1">EssActiveChargeEnergy</div><div class="n2">Accumulated electrical energy of the AC side storage charging inclusive</div></div><svg class="ic" style="left:843px;top:7px;width:20px;height:20px;color:#e6e6e6;"><use href="#i-state" width="20" height="20"/></svg><div class="ty" style="left:866px">state</div><div class="ro">value.energy</div><div class="va">30369 <span class="unit">Wh_Σ</span></div><div class="acl">0</div><svg class="ic" style="left:1583px;top:4px;width:24px;height:24px;color:#fff;opacity:0.5;"><use href="#i-edit" width="24" height="24"/></svg><svg class="ic" style="left:1609px;top:4px;width:24px;height:24px;color:#fff;opacity:0.5;"><use href="#i-delete" width="24" height="24"/></svg><svg class="ic" style="left:1633px;top:4px;width:24px;height:24px;color:#fff;opacity:0.22;"><use href="#i-settings" width="24" height="24"/></svg></div>
</div>
</div>
</body></html>
